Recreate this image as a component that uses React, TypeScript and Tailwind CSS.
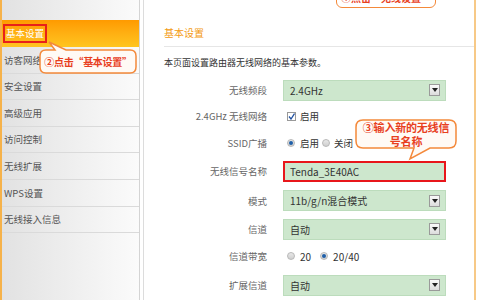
import React from "react";

const FONT = { fontFamily: '"Noto Sans CJK SC", "Liberation Sans", sans-serif' };

function Select({ value }: { value: string }) {
  return (
    <div className="flex h-[21px] w-[163px] items-center justify-between border border-[#bcdcbc] bg-[#cde7cd] pl-[6px] pr-[5px] text-[10px] text-[#333]">
      <span>{value}</span>
      <div className="flex h-[12px] w-[11px] items-center justify-center border border-[#9a9a9a] bg-gradient-to-b from-[#fafafa] to-[#dcdcdc]">
        <svg width="6" height="4" viewBox="0 0 6 4">
          <path d="M0 0 L6 0 L3 4 Z" fill="#222" />
        </svg>
      </div>
    </div>
  );
}

function Radio({ checked }: { checked: boolean }) {
  return (
    <span className="flex h-[8px] w-[8px] items-center justify-center rounded-full border border-[#b8b8b8] bg-gradient-to-b from-[#e8e8e8] to-[#cfcfcf]">
      {checked && <span className="h-[4px] w-[4px] rounded-full bg-[#1f5fa8]" />}
    </span>
  );
}

function Row({ label, h, children }: { label: string; h: string; children: React.ReactNode }) {
  return (
    <div className={`flex items-center ${h}`}>
      <div className="w-[104px] pr-[1px] text-right text-[9.5px] text-[#666]">{label}</div>
      <div className="ml-[15px] flex items-center">{children}</div>
    </div>
  );
}

export default function App() {
  const items = ["访客网络", "安全设置", "高级应用", "访问控制", "无线扩展", "WPS设置", "无线接入信息"];
  return (
    <div className="relative flex h-[300px] w-[480px] overflow-hidden bg-white" style={FONT}>
      {/* Sidebar */}
      <div className="flex h-full w-[140px] flex-col border-l-2 border-r border-l-[#f6b24a] border-r-[#d4d4d4] bg-gradient-to-r from-[#e2e2e2] to-[#fbfbfb]">
        <div className="h-[20px]" />
        <div className="flex h-[27px] items-center bg-gradient-to-b from-[#ff9a00] to-[#ffc51f] pl-[1px]">
          <span className="border-2 border-[#e8201a] px-[1px] py-[1px] text-[9.5px] leading-[13px] text-white">基本设置</span>
        </div>
        {items.map((t) => (
          <div key={t} className="flex h-[26.6px] items-center border-b border-[#dadada] pl-[2px] text-[9.5px] text-[#555]">
            {t}
          </div>
        ))}
        <div className="flex-1" />
      </div>
      <div className="w-[3px]" />
      {/* Content */}
      <div className="flex h-full w-[333px] flex-col border-l border-r-2 border-l-[#dcdcdc] border-r-[#f7c987] pl-[20px]">
        <div className="h-[26px]" />
        <div className="text-[10px] leading-[14px] text-[#f39a12]">基本设置</div>
        <div className="mt-[6px] h-px bg-[#e6e6e6]" />
        <div className="mt-[10px] text-[9px] leading-[12px] text-[#333]">本页面设置路由器无线网络的基本参数。</div>
        <div className="h-[8px]" />
        <Row label="无线频段" h="h-[27px]">
          <Select value="2.4GHz" />
        </Row>
        <Row label="2.4GHz 无线网络" h="h-[26px]">
          <span className="ml-[4px] flex h-[9px] w-[9px] items-center justify-center border border-[#999] bg-white">
            <svg width="7" height="7" viewBox="0 0 7 7">
              <path d="M1 3.5 L3 6 L6.5 0.5" stroke="#2050a0" strokeWidth="1.3" fill="none" />
            </svg>
          </span>
          <span className="ml-[4px] text-[9.5px] text-[#333]">启用</span>
        </Row>
        <Row label="SSID广播" h="h-[27px]">
          <span className="ml-[4px]"><Radio checked /></span>
          <span className="ml-[5px] text-[9.5px] text-[#333]">启用</span>
          <span className="ml-[3px]"><Radio checked={false} /></span>
          <span className="ml-[4px] text-[9.5px] text-[#333]">关闭</span>
        </Row>
        <Row label="无线信号名称" h="h-[30px]">
          <div className="flex h-[21px] w-[163px] items-center border-2 border-[#e8161b] bg-[#cde7cd] pl-[5px] text-[10px] text-[#333]">
            Tenda_3E40AC
          </div>
        </Row>
        <Row label="模式" h="h-[30px]">
          <Select value="11b/g/n混合模式" />
        </Row>
        <Row label="信道" h="h-[27px]">
          <Select value="自动" />
        </Row>
        <Row label="信道带宽" h="h-[28px]">
          <span className="ml-[4px]"><Radio checked={false} /></span>
          <span className="ml-[5px] text-[10px] text-[#333]">20</span>
          <span className="ml-[9px]"><Radio checked /></span>
          <span className="ml-[5px] text-[10px] text-[#333]">20/40</span>
        </Row>
        <Row label="扩展信道" h="h-[30px]">
          <Select value="自动" />
        </Row>
      </div>

      {/* Callout ① (top, cut off) */}
      <div className="absolute left-[336px] top-[-14px] flex h-[22px] w-[100px] items-center justify-center rounded-[6px] border-[1.5px] border-[#f4893a] bg-white text-[10px] font-bold text-[#e8401e]">
        ①点击“无线设置”
      </div>

      {/* Callout ② */}
      <div className="absolute left-[38px] top-[40px] h-[36px] w-[100px]">
        <svg className="absolute inset-0" width="100" height="36" viewBox="0 0 100 36">
          <path
            d="M8 10 L17 10 L11 2 L28 10 L92 10 Q98 10 98 16 L98 27 Q98 33 92 33 L8 33 Q2 33 2 27 L2 16 Q2 10 8 10 Z"
            fill="#fffaf5"
            stroke="#f4893a"
            strokeWidth="1.5"
          />
        </svg>
        <div className="absolute left-[2px] top-[10px] flex h-[23px] w-[96px] items-center justify-center text-[10px] font-bold tracking-[-0.3px] text-[#e8401e]">
          ②点击“基本设置”
        </div>
      </div>

      {/* Callout ③ */}
      <div className="absolute left-[354px] top-[118px] h-[44px] w-[104px]">
        <svg className="absolute inset-0" width="104" height="44" viewBox="0 0 104 44">
          <path
            d="M9 2 L95 2 Q102 2 102 9 L102 23 Q102 30 95 30 L76 30 L56 41 L60 30 L9 30 Q2 30 2 23 L2 9 Q2 2 9 2 Z"
            fill="#fffaf5"
            stroke="#f4893a"
            strokeWidth="1.5"
          />
        </svg>
        <div className="absolute left-[2px] top-[2px] flex h-[28px] w-[100px] flex-col items-center justify-center text-[11px] font-bold leading-[14px] tracking-[-0.2px] text-[#e8401e]">
          <span>③输入新的无线信</span>
          <span>号名称</span>
        </div>
      </div>
    </div>
  );
}
